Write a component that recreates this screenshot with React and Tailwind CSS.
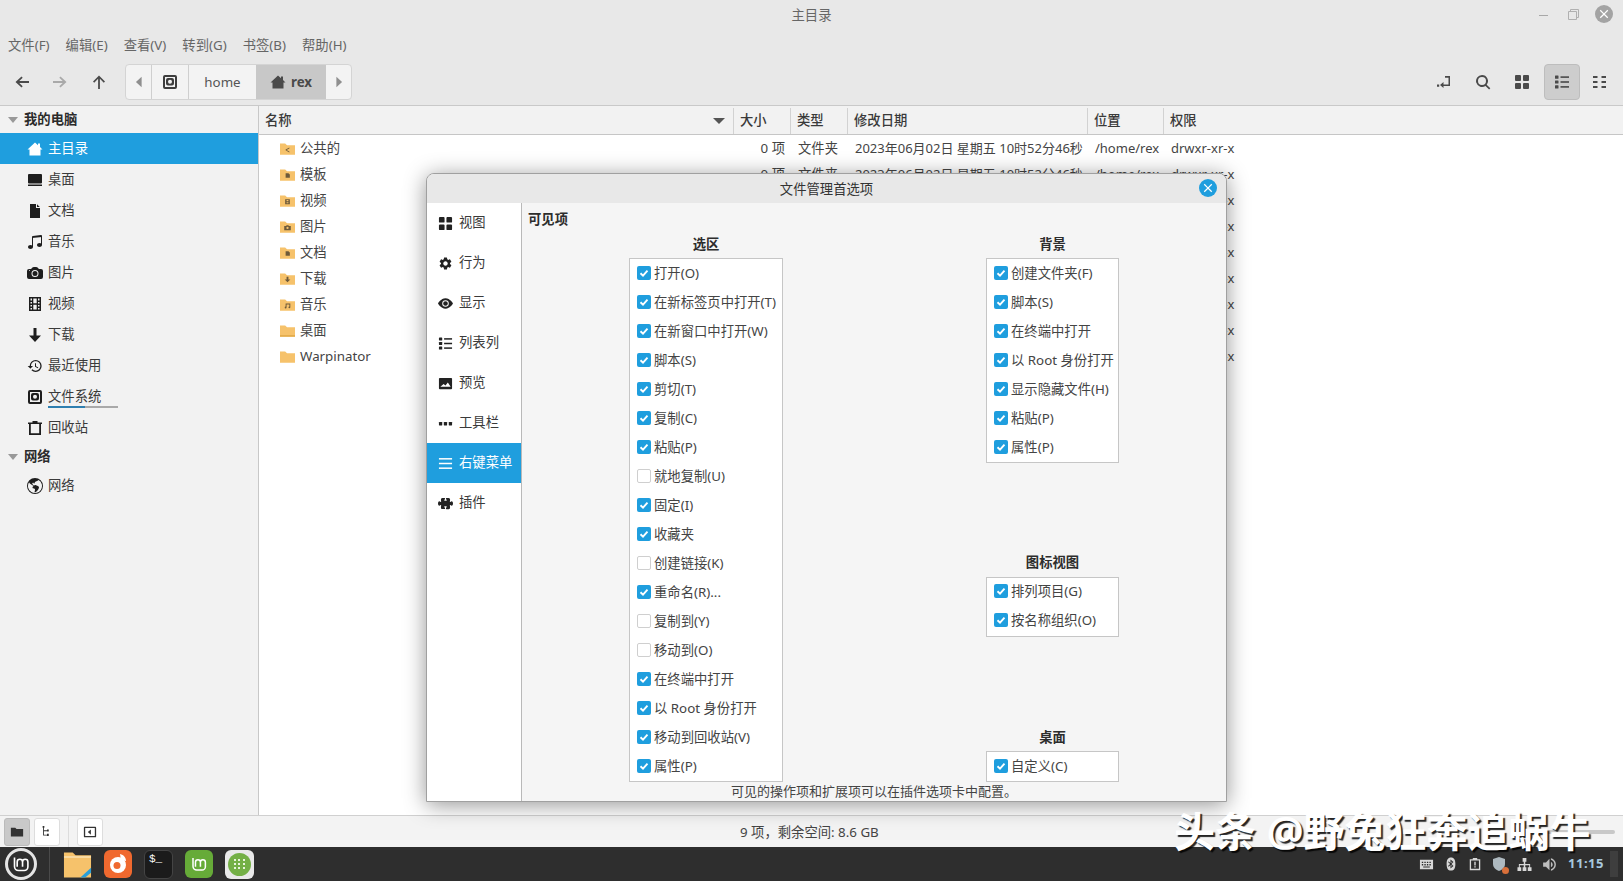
import { BsMusicNoteBeamed, BsCameraFill, BsGlobeAmericas, BsEyeFill, BsPuzzleFill } from 'react-icons/bs';
import { MdHistory, MdSettings, MdVolumeUp } from 'react-icons/md';

// --- DATA ---
const MENUS = ['文件(F)', '编辑(E)', '查看(V)', '转到(G)', '书签(B)', '帮助(H)'];

const PLACES = [
  { label: '主目录', icon: 'home', active: true },
  { label: '桌面', icon: 'desktop' },
  { label: '文档', icon: 'file' },
  { label: '音乐', icon: 'music' },
  { label: '图片', icon: 'camera' },
  { label: '视频', icon: 'film' },
  { label: '下载', icon: 'down' },
  { label: '最近使用', icon: 'history' },
  { label: '文件系统', icon: 'disk', usage: true },
  { label: '回收站', icon: 'trash' },
];

const FILES = [
  { name: '公共的', emblem: 'share' },
  { name: '模板', emblem: 'doc' },
  { name: '视频', emblem: 'film' },
  { name: '图片', emblem: 'cam' },
  { name: '文档', emblem: 'doc' },
  { name: '下载', emblem: 'down' },
  { name: '音乐', emblem: 'note' },
  { name: '桌面', emblem: 'desk' },
  { name: 'Warpinator' },
];

const PREF_TABS = [
  { label: '视图', icon: 'grid' },
  { label: '行为', icon: 'gear' },
  { label: '显示', icon: 'eye' },
  { label: '列表列', icon: 'list' },
  { label: '预览', icon: 'image' },
  { label: '工具栏', icon: 'dots' },
  { label: '右键菜单', icon: 'menu', active: true },
  { label: '插件', icon: 'puzzle' },
];

const SELECTION = [
  ['打开(O)', 1], ['在新标签页中打开(T)', 1], ['在新窗口中打开(W)', 1], ['脚本(S)', 1], ['剪切(T)', 1], ['复制(C)', 1],
  ['粘贴(P)', 1], ['就地复制(U)', 0], ['固定(I)', 1], ['收藏夹', 1], ['创建链接(K)', 0], ['重命名(R)...', 1],
  ['复制到(Y)', 0], ['移动到(O)', 0], ['在终端中打开', 1], ['以 Root 身份打开', 1], ['移动到回收站(V)', 1], ['属性(P)', 1],
];
const BACKGROUND = [
  ['创建文件夹(F)', 1], ['脚本(S)', 1], ['在终端中打开', 1], ['以 Root 身份打开', 1], ['显示隐藏文件(H)', 1], ['粘贴(P)', 1], ['属性(P)', 1],
];
const ICON_VIEW = [['排列项目(G)', 1], ['按名称组织(O)', 1]];
const DESKTOP = [['自定义(C)', 1]];

// --- ICONS ---
const Icon = ({ name, className = 'w-4 h-4' }) => {
  if (name === 'music') return <BsMusicNoteBeamed className={className} />;
  if (name === 'camera') return <BsCameraFill className={className} />;
  if (name === 'history') return <MdHistory className={className} />;
  if (name === 'gear') return <MdSettings className={className} />;
  if (name === 'eye') return <BsEyeFill className={className} />;
  if (name === 'puzzle') return <BsPuzzleFill className={className} />;
  if (name === 'globe') return <BsGlobeAmericas className={className} />;
  return (
    <svg viewBox="0 0 16 16" className={className} fill="currentColor">
      {name === 'home' && <path d="M8 1.5l3 2.7V2.5h2v3.5l2.5 2.4H13.5V14.5h-11V8.4H.5z" />}
      {name === 'desktop' && <><rect x="1" y="2" width="14" height="9.5" rx="1" /><rect x="1" y="12.5" width="14" height="1.5" /></>}
      {name === 'file' && <path d="M3 1h6v4h4v10H3zM10 1.2L12.8 4H10z" />}
      {name === 'film' && <path fillRule="evenodd" d="M2 1h12v14H2zM3.5 2.5v2h1.5v-2zM3.5 6v1.5h1.5V6zM3.5 9v1.5h1.5V9zM3.5 12v1.5h1.5V12zM11 2.5v2h1.5v-2zM11 6v1.5h1.5V6zM11 9v1.5h1.5V9zM11 12v1.5h1.5V12zM6.3 2.5v4.700h3.4V2.5zM6.3 8.8v4.700h3.4V8.8z" />}
      {name === 'down' && <path d="M6.5 1h3v7.500H14L8 15 2 8.500h4.500z" />}
      {name === 'disk' && <path fillRule="evenodd" d="M3 1h10a2 2 0 012 2v10a2 2 0 01-2 2H3a2 2 0 01-2-2V3a2 2 0 012-2zM3 3v10h10V3zM6 4h4a2 2 0 012 2v3.500a2 2 0 01-2 2H6a2 2 0 01-2-2V6a2 2 0 012-2zM8 5.800a2 2 0 100 4 2 2 0 000-4z" />}
      {name === 'trash' && <path fillRule="evenodd" d="M5.500 1h5v1.500H15V4H14v11H2V4H1V2.500h4.500zM3.800 4v9.200h8.400V4z" />}
      {name === 'grid' && <><rect x="1" y="1" width="6" height="6" rx="1" /><rect x="9" y="1" width="6" height="6" rx="1" /><rect x="1" y="9" width="6" height="6" rx="1" /><rect x="9" y="9" width="6" height="6" rx="1" /></>}
      {name === 'list' && <><rect x="1" y="1.500" width="3.500" height="3.200" rx=".5" /><rect x="1" y="6.400" width="3.500" height="3.200" rx=".5" /><rect x="1" y="11.300" width="3.500" height="3.200" rx=".5" /><rect x="6.500" y="2.300" width="8.500" height="1.600" /><rect x="6.500" y="7.200" width="8.500" height="1.600" /><rect x="6.500" y="12.100" width="8.500" height="1.600" /></>}
      {name === 'compact' && <><rect x="1" y="2" width="4.500" height="2" /><rect x="1" y="7" width="4.500" height="2" /><rect x="1" y="12" width="4.500" height="2" /><rect x="9.500" y="2" width="4.500" height="2" /><rect x="9.500" y="7" width="4.500" height="2" /><rect x="9.500" y="12" width="4.500" height="2" /></>}
      {name === 'image' && <path fillRule="evenodd" d="M2 2h12a1 1 0 011 1v10a1 1 0 01-1 1H2a1 1 0 01-1-1V3a1 1 0 011-1zM2.500 11.500h11L10.500 7 8 10 6 8.500z" />}
      {name === 'dots' && <><rect x="1" y="6.500" width="3.500" height="3.500" rx=".5" /><rect x="6.200" y="6.500" width="3.500" height="3.500" rx=".5" /><rect x="11.500" y="6.500" width="3.500" height="3.500" rx=".5" /></>}
      {name === 'menu' && <><rect x="1" y="2.200" width="14" height="1.600" /><rect x="1" y="7.200" width="14" height="1.600" /><rect x="1" y="12.200" width="14" height="1.600" /></>}
      {name === 'left' && <path d="M11 2v12L4.500 8z" />}
      {name === 'right' && <path d="M5 2v12l6.500-6z" />}
      {name === 'back' && <path d="M7.500 2.500l1.200 1.200-3.400 3.400H15v1.800H5.300l3.400 3.400-1.200 1.200L1.500 8z" />}
      {name === 'forward' && <path d="M8.500 2.500l-1.200 1.200 3.400 3.400H1v1.800h9.700l-3.400 3.400 1.200 1.200L14.500 8z" />}
      {name === 'up' && <path d="M8 1.500L14 7.500l-1.200 1.200-3.900-3.900V15H7.100V4.800L3.200 8.700 2 7.500z" />}
      {name === 'jump' && <path d="M9 2h5v10H7.500V14L4 11l3.500-3v2.500h5V3.700H9zM1 10.500h2.200v2.200H1z" />}
      {name === 'search' && <path fillRule="evenodd" d="M7 1a6 6 0 014.700 9.700l3.600 3.600-1.200 1.200-3.600-3.600A6 6 0 117 1zm0 2a4 4 0 100 8 4 4 0 000-8z" />}
      {name === 'close' && <path d="M4.200 3.200L8 7l3.800-3.800 1 1L9 8l3.800 3.800-1 1L8 9l-3.800 3.800-1-1L7 8 3.200 4.200z" />}
      {name === 'folderOpen' && <path d="M1 3h5l1.500 1.500H15V13H1z" />}
      {name === 'tree' && <path d="M3 1h2v2H4.500v3H8V5h2v2.500H8V7H4.500v4H8v-1h2v2.500H8V12H3.500V3H3z" />}
      {name === 'sideToggle' && <path fillRule="evenodd" d="M2 2h12a1 1 0 011 1v10a1 1 0 01-1 1H2a1 1 0 01-1-1V3a1 1 0 011-1zm.5 1.500v9h11v-9zM9 5v6L5.500 8z" />}
      {name === 'clipboard' && <path fillRule="evenodd" d="M5.500 1h5v1.500H14V15H2V2.500h3.500zM3.500 4v9.500h9V4zM7.200 5.500h1.600v4.200H7.200zM7.200 10.500h1.600v1.600H7.200z" />}
      {name === 'network' && <path d="M6 1h4v4H8.800v2.500H14V11h1.500v4h-4v-4H13V8.700H8.800V11H10v4H6v-4h1.200V8.700H3V11h1.500v4h-4v-4H2V7.500h5.200V5H6z" />}
      {name === 'keyboard' && <path fillRule="evenodd" d="M1 3h14v10H1zM3 5v1.500h1.500V5zM5.700 5v1.500h1.500V5zM8.400 5v1.500h1.500V5zM11.100 5v1.500h1.500V5zM3 7.500V9h1.500V7.500zM5.700 7.500V9h1.500V7.500zM8.400 7.500V9h1.500V7.500zM11.100 7.500V9h1.500V7.500zM4.500 10v1.300h7V10z" />}
      {name === 'bluetooth' && <path fillRule="evenodd" d="M8 .5c3.500 0 5 2.500 5 7.500s-1.500 7.500-5 7.500S3 13 3 8 4.500.5 8 .5zM7.400 2.800v4L5.300 5l-.7.800L7 8l-2.400 2.200.7.800 2.100-1.800v4l3.400-3L8.500 8l2.300-2.200zM8.400 5l1 .9-1 1zM8.400 9.100l1 1-1 .9z" />}
    </svg>
  );
};

const Emblem = ({ kind }) => {
  if (kind === 'desk') return <rect x="0" y="11.500" width="16" height="1.500" fill="#e0a845" />;
  return (
    <g fill="#6e5a3a">
      {kind === 'share' && <path d="M6 7.600l4-2.200v1l-3 1.600 3 1.600v1l-4-2.200z" />}
      {kind === 'doc' && <path d="M6 5h3l1.500 1.500V10H6z" />}
      {kind === 'film' && <path fillRule="evenodd" d="M5.500 5h5v5.500h-5zM7 6v1.300h2V6zM7 8.200v1.300h2V8.200z" />}
      {kind === 'cam' && <path fillRule="evenodd" d="M4.500 6h2L7 5h2l.5 1h2v4.500h-7zM8 6.800a1.200 1.200 0 100 2.400 1.200 1.200 0 000-2.400z" />}
      {kind === 'down' && <path d="M7 4.500h2v3h2l-3 3-3-3h2z" />}
      {kind === 'note' && <path d="M6 5.500h5v4a1 1 0 11-1-1V6.500H7v3.200a1 1 0 11-1-1z" />}
    </g>
  );
};

const FolderIcon = ({ emblem }) => (
  <svg viewBox="0 0 16 14" className="w-[15px] h-[14px] shrink-0">
    <path d="M0 1h5.500L7.500 3H16v10H0z" fill="#f6c26b" />
    {emblem && <Emblem kind={emblem} />}
  </svg>
);

// --- CHROME ---
const ToolIcon = ({ name, muted, className = '' }) => (
  <div className={`flex items-center justify-center ${muted ? 'text-[#a9a9a9]' : 'text-[#4a4a4a]'} ${className}`}>
    <Icon name={name} className="w-4 h-4" />
  </div>
);

const Toolbar = () => (
  <div className="h-[46px] border-b border-[#c9c9c9] flex items-center pb-[1px] bg-[#e8e8e8]">
    <ToolIcon name="back" className="w-[38px] ml-[3px]" />
    <ToolIcon name="forward" muted className="w-[38px]" />
    <ToolIcon name="up" className="w-[40px]" />
    <div className="ml-[6px] h-[36px] flex rounded-[4px] border border-[#d4d4d4] bg-[#f3f3f3] overflow-hidden text-[#555]">
      <div className="w-[26px] flex items-center justify-center border-r border-[#cfcfcf] text-[#8f8f8f]"><Icon name="left" className="w-3.5 h-3.5" /></div>
      <div className="w-[37px] flex items-center justify-center border-r border-[#cfcfcf] text-[#3d3d3d]"><Icon name="disk" className="w-4 h-4" /></div>
      <div className="w-[67px] flex items-center justify-center pt-[1px]">home</div>
      <div className="w-[70px] flex items-center justify-center gap-[5px] bg-[#c8c8c8] font-bold text-[#4a4a4a]"><Icon name="home" className="w-4 h-4" /><span className="pt-[1px]">rex</span></div>
      <div className="w-[25px] flex items-center justify-center text-[#8f8f8f]"><Icon name="right" className="w-3.5 h-3.5" /></div>
    </div>
    <div className="ml-auto mr-[3px] flex items-center">
      <ToolIcon name="jump" className="w-[39px]" />
      <ToolIcon name="search" className="w-[39px]" />
      <ToolIcon name="grid" className="w-[39px] mr-[3px]" />
      <ToolIcon name="list" className="w-[36px] h-[36px] bg-[#cdcdcd] border border-[#bdbdbd] rounded-[4px]" />
      <ToolIcon name="compact" className="w-[40px]" />
    </div>
  </div>
);

const SectionHeader = ({ label, className }) => (
  <div className={`flex items-center pl-[8px] gap-[6px] font-bold text-[#2b2b2b] ${className}`}>
    <span className="w-0 h-0 border-x-[5px] border-x-transparent border-t-[6px] border-t-[#999]" />
    <span className="pt-[1px]">{label}</span>
  </div>
);

const Sidebar = () => (
  <aside className="w-[259px] shrink-0 bg-[#f2f2f2] border-r border-[#c8c8c8] text-[#3a3a3a]">
    <SectionHeader label="我的电脑" className="h-[27px]" />
    {PLACES.map((p) => (
      <div key={p.label} className={`h-[31px] flex items-center pl-[27px] gap-[5px] ${p.active ? 'bg-[#1f9ede] text-white' : ''}`}>
        <span className={p.active ? 'text-white' : 'text-[#1e1e1e]'}><Icon name={p.icon} className="w-4 h-4" /></span>
        <div className="relative pt-[1px]">
          {p.label}
          {p.usage && (
            <div className="absolute left-0 top-[20px] w-[70px] h-[2px] bg-[#a9a9a9]">
              <div className="w-[37px] h-full bg-[#2f7fb0]" />
            </div>
          )}
        </div>
      </div>
    ))}
    <SectionHeader label="网络" className="h-[27px]" />
    <div className="h-[31px] flex items-center pl-[27px] gap-[5px]">
      <span className="text-[#1e1e1e]"><Icon name="globe" className="w-4 h-4" /></span>
      <span className="pt-[1px]">网络</span>
    </div>
  </aside>
);

const COLUMNS = 'grid grid-cols-[475px_57px_57px_240px_76px_1fr]';

const FileList = () => (
  <div className="flex-1 bg-white min-w-0">
    <div className={`${COLUMNS} h-[29px] mb-[1px] pt-[2px] bg-[#f2f2f2] border-b border-[#c6c6c6] font-medium text-[#3a3a3a]`}>
      <div className="flex items-center justify-between pl-[6px] pr-[8px] border-r border-[#d2d2d2]">
        名称
        <span className="w-0 h-0 border-x-[6px] border-x-transparent border-t-[6px] border-t-[#555]" />
      </div>
      <div className="flex items-center pl-[6px] border-r border-[#d2d2d2]">大小</div>
      <div className="flex items-center pl-[6px] border-r border-[#d2d2d2]">类型</div>
      <div className="flex items-center pl-[6px] border-r border-[#d2d2d2]">修改日期</div>
      <div className="flex items-center pl-[6px] border-r border-[#d2d2d2]">位置</div>
      <div className="flex items-center pl-[6px]">权限</div>
    </div>
    {FILES.map((f) => (
      <div key={f.name} className={`${COLUMNS} h-[26px] items-center text-[#444]`}>
        <div className="flex items-center pl-[21px] gap-[5px]"><FolderIcon emblem={f.emblem} />{f.name}</div>
        <div className="text-right pr-[6px]">0 项</div>
        <div className="pl-[7px]">文件夹</div>
        <div className="pl-[7px] text-[13px] whitespace-nowrap">2023年06月02日 星期五 10时52分46秒</div>
        <div className="pl-[7px] text-[13px]">/home/rex</div>
        <div className="pl-[7px] text-[13px]">drwxr-xr-x</div>
      </div>
    ))}
  </div>
);

const StatusBar = () => (
  <div className="relative h-[32px] bg-[#f3f3f3] border-t border-[#d0d0d0] flex items-center pl-[4px] text-[#444]">
    <button className="w-[26px] h-[28px] bg-[#c9c9c9] border border-[#bbb] rounded-[3px] flex items-center justify-center text-[#333]"><Icon name="folderOpen" className="w-3.5 h-3.5" /></button>
    <button className="ml-[4px] w-[26px] h-[28px] bg-white border border-[#ddd] rounded-[3px] flex items-center justify-center text-[#333]"><Icon name="tree" className="w-3.5 h-3.5" /></button>
    <div className="ml-[8px] mr-[8px] w-px h-full bg-[#dcdcdc]" />
    <button className="w-[26px] h-[28px] bg-white border border-[#ddd] rounded-[3px] flex items-center justify-center text-[#333]"><Icon name="sideToggle" className="w-3.5 h-3.5" /></button>
    <div className="absolute left-[740px] top-[7px]">9 项，剩余空间: 8.6 GB</div>
    <div className="absolute left-[1545px] top-[14px] w-[70px] h-[4px] rounded bg-[#c8c8c8]" />
  </div>
);

const MintLogo = ({ className, stroke = 'white' }) => (
  <svg viewBox="0 0 32 32" className={className} fill="none" stroke={stroke}>
    <path d="M8 8v11a5 5 0 005 5h7a4.500 4.500 0 004.500-4.500v-6a3.300 3.300 0 00-6.600 0v6m0-6a3.300 3.300 0 00-6.600 0v6" strokeWidth="2" />
  </svg>
);

const Taskbar = () => (
  <div className="h-[34px] bg-[#2e2e2e] flex items-center relative overflow-hidden">
    <div className="w-[50px] h-full border-r border-[#4a4a4a] relative shrink-0">
      <div className="absolute left-[5px] top-[1px] w-[32px] h-[32px] rounded-full border-[3px] border-[#e4e4e4] flex items-center justify-center">
        <MintLogo className="w-[26px] h-[26px]" />
      </div>
    </div>
    <div className="ml-[13px] flex items-center gap-[12px]">
      <svg viewBox="0 0 30 28" className="w-[29px] h-[28px]">
        <path d="M1 2h9l3 3h16v23H1z" fill="#f6c26b" />
        <rect x="1" y="6" width="28" height="1.500" fill="#fbe3b4" />
        <path d="M29 18v5l-6 5h-5z" fill="#2a9fd8" />
      </svg>
      <svg viewBox="0 0 28 28" className="w-[28px] h-[28px]">
        <rect width="28" height="28" rx="6" fill="#f0692f" />
        <circle cx="14" cy="15" r="8" fill="white" />
        <circle cx="13" cy="15.500" r="3.500" fill="#f0692f" />
        <path d="M16 4c4 1 6 4 6 7l-5-1z" fill="white" />
      </svg>
      <div className="w-[29px] h-[29px] rounded-[6px] bg-[#1b1b1b] border border-[#444] font-['Liberation_Mono',monospace] text-[11px] leading-none text-white pl-[4px] pt-[3px]">$_</div>
      <div className="w-[28px] h-[28px] rounded-[6px] bg-[#66ab38] flex items-center justify-center">
        <MintLogo className="w-[24px] h-[24px]" />
      </div>
      <div className="w-[29px] h-[29px] rounded-[6px] bg-[#e9e9e9] flex items-center justify-center">
        <div className="w-[23px] h-[23px] rounded-full bg-[#74b046] grid grid-cols-3 place-items-center p-[5px]">
          {[...Array(9)].map((_, i) => <span key={i} className="w-[2px] h-[2px] bg-[#e8f3dc]" />)}
        </div>
      </div>
    </div>
    <div className="ml-auto mr-[5px] flex items-center text-[#d8d8d8]">
      <Icon name="keyboard" className="w-[15px] h-[15px] mr-[10px]" />
      <Icon name="bluetooth" className="w-[14px] h-[14px] mr-[10px]" />
      <Icon name="clipboard" className="w-[14px] h-[14px] mr-[9px]" />
      <div className="relative mr-[10px]">
        <svg viewBox="0 0 16 16" className="w-[16px] h-[16px]"><path d="M8 1l6 2v5c0 3.500-3 6-6 7-3-1-6-3.500-6-7V3z" fill="#aeb9bf" /></svg>
        <span className="absolute right-[-2px] bottom-[-2px] w-[7px] h-[7px] rounded-full bg-[#d9703a]" />
      </div>
      <Icon name="network" className="w-[15px] h-[15px] mr-[9px]" />
      <MdVolumeUp className="w-[17px] h-[17px] mr-[10px] text-[#bdbdbd]" />
      <span className="text-[13px] font-bold text-[#a8c8de] tracking-[0.5px] mr-[6px]">11:15</span>
      <div className="w-[8px] h-[26px] bg-[#3e3e3e]" />
    </div>
  </div>
);

// --- PREFERENCES DIALOG ---
const CheckRow = ({ label, checked }) => (
  <div className="h-[29px] flex items-center pl-[7px] gap-[3px] whitespace-nowrap">
    {checked ? (
      <span className="w-[14px] h-[14px] rounded-[2px] bg-[#1f9ede] flex items-center justify-center shrink-0 -translate-y-[1px]">
        <svg viewBox="0 0 14 14" className="w-[14px] h-[14px]" fill="none" stroke="white" strokeWidth="1.900"><path d="M3.500 7.200l2.500 2.400 4.500-5" /></svg>
      </span>
    ) : (
      <span className="w-[14px] h-[14px] rounded-[2px] bg-white border border-[#cfcfcf] shrink-0 -translate-y-[1px]" />
    )}
    <span>{label}</span>
  </div>
);

const CheckGroup = ({ title, items, className }) => (
  <div className={className}>
    <div className="h-[21px] mb-[3px] flex items-center justify-center font-bold text-[#2d2d2d]">{title}</div>
    <div className="bg-white border border-[#c6c6c6]">
      {items.map(([label, checked]) => <CheckRow key={label} label={label} checked={checked} />)}
    </div>
  </div>
);

const PrefsDialog = () => (
  <div className="absolute left-[426px] top-[173px] w-[801px] h-[629px] flex flex-col rounded-t-[8px] border border-[#a0a0a0] overflow-hidden bg-[#f5f5f5] shadow-[0_3px_22px_rgba(0,0,0,0.42)] text-[#444]">
    <div className="relative h-[29px] shrink-0 bg-[#e8e8e8] flex items-center justify-center pt-[2px] text-[#333]">
      文件管理首选项
      <span className="absolute right-[9px] top-[5px] w-[18px] h-[18px] rounded-full bg-[#1f9ede] text-white flex items-center justify-center">
        <Icon name="close" className="w-3.5 h-3.5" />
      </span>
    </div>
    <div className="flex-1 flex min-h-0">
      <div className="w-[95px] shrink-0 bg-white border-r border-[#b9b9b9]">
        {PREF_TABS.map((t) => (
          <div key={t.label} className={`h-[40px] flex items-center pl-[11px] gap-[6px] ${t.active ? 'bg-[#1f9ede] text-white' : 'text-[#3a3a3a]'}`}>
            <span className={t.active ? 'text-white' : 'text-[#222]'}><Icon name={t.icon} className="w-[15px] h-[15px]" /></span>
            {t.label}
          </div>
        ))}
      </div>
      <div className="flex-1 flex flex-col min-w-0">
        <div className="h-[20px] mt-[6px] ml-[6px] font-bold text-[#2d2d2d] leading-[20px]">可见项</div>
        <div className="h-[553px] mt-[5px] flex pl-[107px] gap-[203px]">
          <CheckGroup title="选区" items={SELECTION} className="w-[154px]" />
          <div className="w-[133px] flex flex-col justify-between">
            <CheckGroup title="背景" items={BACKGROUND} />
            <CheckGroup title="图标视图" items={ICON_VIEW} className="-mt-[1px]" />
            <CheckGroup title="桌面" items={DESKTOP} />
          </div>
        </div>
        <div className="flex-1 border-b border-dashed border-[#bdbdbd] flex items-center justify-center text-[13px] text-[#444]">
          可见的操作项和扩展项可以在插件选项卡中配置。
        </div>
      </div>
    </div>
  </div>
);

export default function App() {
  return (
    <div className="relative w-[1623px] h-[881px] overflow-hidden flex flex-col bg-[#e8e8e8] font-['Noto_Sans','Noto_Sans_CJK_SC',sans-serif] text-[13.33px] text-[#444]">
      {/* title bar */}
      <div className="relative h-[30px] shrink-0 flex items-center justify-center pt-[1px] text-[#666]">
        主目录
        <div className="absolute right-[10px] top-[5px] flex items-center text-[#999]">
          <span className="w-[9px] h-px bg-[#a8a8a8] mt-[3px] mr-[20px]" />
          <svg viewBox="0 0 11 11" className="w-[11px] h-[11px] mr-[16px]" fill="none" stroke="#b0b0b0"><path d="M.5 2.500h8v8h-8zM2.500 2.500v-2h8v8h-2" /></svg>
          <span className="w-[18px] h-[18px] rounded-full bg-[#a3a3a3] text-white flex items-center justify-center"><Icon name="close" className="w-3.5 h-3.5" /></span>
        </div>
      </div>
      {/* menu */}
      <div className="h-[30px] shrink-0 flex items-center gap-[16px] pl-[8px] pt-[2px] text-[#666]">
        {MENUS.map((m) => <span key={m}>{m}</span>)}
      </div>
      <Toolbar />
      <div className="flex-1 flex min-h-0">
        <Sidebar />
        <FileList />
      </div>
      <StatusBar />
      <Taskbar />

      <PrefsDialog />

      {/* watermark */}
      <div className="absolute left-[1174px] top-[809px] text-[41px] leading-[44px] font-bold text-white whitespace-nowrap [text-shadow:2px_2px_1px_rgba(0,0,0,0.85)]">
        头条 @野兔狂奔追蜗牛
      </div>
    </div>
  );
}
